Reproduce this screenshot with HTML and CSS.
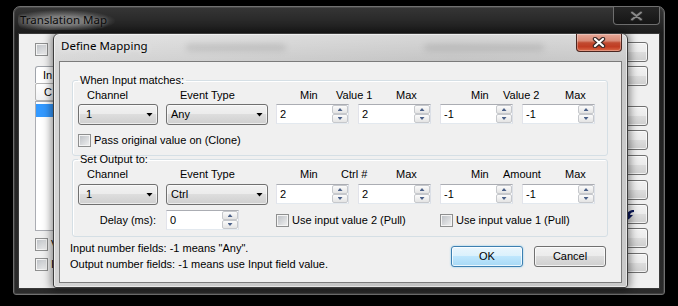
FILE: index.html
```html
<!DOCTYPE html>
<html lang="en">
<head>
  <meta charset="UTF-8">
  <title>Define Mapping</title>
  <link rel="stylesheet" href="styles.css">
</head>
<body>
  <div class="desktop">
    <div class="win-bg">
      <div class="bg-title">
        <span class="bg-caption">Translation Map</span>
        <span class="bg-close"><svg width="13" height="10" viewBox="0 0 13 10"><path d="M2 1.5l9 7M11 1.5l-9 7" stroke="#2a2a2a" stroke-width="4" stroke-linecap="round"/><path d="M2 1.5l9 7M11 1.5l-9 7" stroke="#8a8a8a" stroke-width="2" stroke-linecap="round"/></svg></span>
      </div>
      <div class="bg-client">
        <div class="bg-left">
          <span class="chk"></span>
          <div class="bg-tab">In</div>
          <div class="bg-head">C</div>
          <div class="bg-list"><div class="bg-sel"></div></div>
          <div class="bg-opt"><span class="chk"></span>V</div>
          <div class="bg-opt"><span class="chk"></span>I</div>
        </div>
        <div class="bg-buttons">
          <span class="bg-btn"></span>
          <span class="bg-btn"></span>
          <span class="bg-btn sep"></span>
          <span class="bg-btn"></span>
          <span class="bg-btn m5"></span>
          <span class="bg-btn m5"></span>
          <span class="bg-btn"><svg class="bg-arrow" width="12" height="12" viewBox="0 0 12 12"><path d="M11 2C7 2 4 4 4 7H1l4.5 4.5L10 7H7c0-2 2-3 4-3z" fill="#0c1a5c"/></svg></span>
          <span class="bg-btn"></span>
          <span class="bg-btn m5"></span>
        </div>
      </div>
    </div>

    <div class="dialog">
      <div class="dlg-title">
        <span class="dlg-caption">Define Mapping</span>
        <span class="ghost g1"></span>
        <span class="ghost g2"></span>
        <span class="dlg-close"><svg width="14" height="11" viewBox="0 0 14 11"><path d="M3 2l8 7M11 2l-8 7" stroke="#3b2a28" stroke-width="4.4" stroke-linecap="round"/><path d="M3 2l8 7M11 2l-8 7" stroke="#fff" stroke-width="2.2" stroke-linecap="round"/></svg></span>
      </div>
      <div class="dlg-client">
        <fieldset class="group">
          <legend>When Input matches:</legend>
          <div class="heads">
            <span class="first">Channel</span>
            <span>Event Type</span>
            <span>Min</span>
            <span>Value 1</span>
            <span>Max</span>
            <span>Min</span>
            <span>Value 2</span>
            <span>Max</span>
          </div>
          <div class="controls">
            <span class="combo ch"><span>1</span><b></b></span>
            <span class="combo ev"><span>Any</span><b></b></span>
            <span class="spin"><span class="val">2</span><span class="arrows"><i class="up"></i><i class="dn"></i></span></span>
            <span class="spin"><span class="val">2</span><span class="arrows"><i class="up"></i><i class="dn"></i></span></span>
            <span class="spin"><span class="val">-1</span><span class="arrows"><i class="up"></i><i class="dn"></i></span></span>
            <span class="spin"><span class="val">-1</span><span class="arrows"><i class="up"></i><i class="dn"></i></span></span>
          </div>
          <label class="check clone"><span class="chk"></span>Pass original value on (Clone)</label>
        </fieldset>

        <fieldset class="group out">
          <legend>Set Output to:</legend>
          <div class="heads">
            <span class="first">Channel</span>
            <span>Event Type</span>
            <span>Min</span>
            <span class="ctrl">Ctrl #</span>
            <span>Max</span>
            <span>Min</span>
            <span>Amount</span>
            <span>Max</span>
          </div>
          <div class="controls">
            <span class="combo ch"><span>1</span><b></b></span>
            <span class="combo ev"><span>Ctrl</span><b></b></span>
            <span class="spin"><span class="val">2</span><span class="arrows"><i class="up"></i><i class="dn"></i></span></span>
            <span class="spin"><span class="val">2</span><span class="arrows"><i class="up"></i><i class="dn"></i></span></span>
            <span class="spin"><span class="val">-1</span><span class="arrows"><i class="up"></i><i class="dn"></i></span></span>
            <span class="spin"><span class="val">-1</span><span class="arrows"><i class="up"></i><i class="dn"></i></span></span>
          </div>
          <div class="controls delay">
            <span class="delay-label">Delay (ms):</span>
            <span class="delay-cell"><span class="spin"><span class="val">0</span><span class="arrows"><i class="up"></i><i class="dn"></i></span></span></span>
            <label class="check pull2"><span class="chk"></span>Use input value 2 (Pull)</label>
            <label class="check"><span class="chk"></span>Use input value 1 (Pull)</label>
          </div>
        </fieldset>

        <div class="footer">
          <div class="notes">
            <p>Input number fields: -1 means "Any".</p>
            <p>Output number fields: -1 means use Input field value.</p>
          </div>
          <button class="btn default">OK</button>
          <button class="btn">Cancel</button>
        </div>
      </div>
    </div>
  </div>
</body>
</html>
```

FILE: styles.css
```css
body { margin: 0; background: #000; font-family: "Liberation Sans", Arial, sans-serif; font-size: 11px; line-height: 13px; color: #000; }
.desktop { position: relative; width: 678px; height: 306px; overflow: hidden; }

/* window behind */
.win-bg { position: absolute; left: 13px; top: 6px; width: 652px; height: 289px; box-sizing: border-box; border: 1px solid #707070; border-radius: 7px 7px 3px 3px; padding: 0 4px 5px; display: flex; flex-direction: column; background: linear-gradient(180deg, #363636 0, #1d1d1d 26px, #2b2b2b 100%); box-shadow: inset 0 0 0 1px rgba(255,255,255,0.1); }
.bg-title { height: 26px; flex: none; display: flex; align-items: flex-start; }
.bg-caption { font-family: "Noto Sans", sans-serif; font-size: 11.5px; line-height: 16px; margin-top: 3px; padding: 2px 8px 2px 2px; color: #0a0a0a; border-radius: 8px; background: radial-gradient(ellipse at 45% 55%, rgba(150,150,150,0.75) 30%, rgba(120,120,120,0) 72%); text-shadow: 0 0 3px rgba(170,170,170,0.6); }
.bg-close { margin-left: auto; width: 47px; height: 18px; box-sizing: border-box; border: 1px solid #6e6e6e; border-top: none; border-radius: 0 0 4px 4px; background: linear-gradient(#262626, #151515); display: flex; align-items: center; justify-content: center; }
.bg-client { flex: 1; border: 1px solid #3a3a3a; background: #f0f0f0; display: flex; justify-content: space-between; overflow: hidden; }
.bg-left { padding-left: 16px; width: 32px; overflow: hidden; display: flex; flex-direction: column; align-items: flex-start; }
.bg-left > .chk { margin-top: 9px; }
.bg-tab { margin-top: 10px; width: 80px; height: 17px; flex: none; box-sizing: border-box; border: 1px solid #a0a4ab; border-bottom: none; border-radius: 3px 3px 0 0; padding-left: 7px; line-height: 16px; background: #fff; }
.bg-head { width: 80px; height: 18px; flex: none; box-sizing: border-box; border: 1px solid #b5b5b5; border-radius: 2px; padding-left: 8px; line-height: 16px; background: linear-gradient(#ffffff, #f1f2f4); }
.bg-list { width: 80px; height: 130px; flex: none; box-sizing: border-box; border: 1px solid #abadb3; background: #fff; padding: 2px 0 0 0; }
.bg-sel { height: 13px; background: #3399ff; }
.bg-opt { margin-top: 7px; display: flex; align-items: center; gap: 3px; }
.bg-buttons { padding: 8px 11px 0 0; display: flex; flex-direction: column; gap: 4px; }
.bg-btn { display: block; width: 80px; height: 20px; box-sizing: border-box; border: 1px solid #707070; border-radius: 3px; background: linear-gradient(#f2f2f2, #ebebeb 50%, #dddddd 50%, #cfcfcf); box-shadow: inset 0 0 0 1px rgba(255,255,255,0.7); }
.bg-btn.sep { margin-top: 16px; }
.bg-btn.m5 { margin-top: 1px; }
.bg-arrow { display: block; margin: 3px 0 0 54px; }

/* dialog */
.dialog { position: absolute; left: 53px; top: 33px; width: 575px; height: 255px; box-sizing: border-box; border: 1px solid #3d3d3d; border-radius: 6px 6px 3px 3px; padding: 0 5px 4px; display: flex; flex-direction: column; background: linear-gradient(180deg, rgba(255,255,255,0.35), rgba(255,255,255,0) 30px), linear-gradient(100deg, #d6d6d6 0%, #cbcbcb 35%, #c2c2c2 65%, #cacaca 100%); box-shadow: inset 0 0 0 1px rgba(255,255,255,0.55), 0 0 9px 2px rgba(0,0,0,0.45); }
.dlg-title { height: 27px; flex: none; display: flex; align-items: flex-start; }
.dlg-caption { font-family: "Noto Sans", sans-serif; font-size: 11.5px; line-height: 16px; padding: 4px 0 0 2px; color: #000; text-shadow: 0 0 6px rgba(255,255,255,0.8); }
.ghost { height: 7px; margin-top: 10px; border-radius: 4px; background: #707070; opacity: 0.22; filter: blur(3px); }
.ghost.g1 { width: 100px; margin-left: 38px; }
.ghost.g2 { width: 120px; margin-left: 138px; }
.dlg-close { margin-left: auto; width: 46px; height: 18px; box-sizing: border-box; border: 1px solid #4a2620; border-top: none; border-radius: 0 0 4px 4px; display: flex; align-items: center; justify-content: center; background: linear-gradient(#e7a898 0%, #d88a76 40%, #c14a30 52%, #c03c22 75%, #db6a48 100%); box-shadow: inset 0 0 0 1px rgba(255,255,255,0.3); }
.dlg-client { flex: 1; border: 1px solid #7b7b7b; background: #f0f0f0; padding: 12px 13px 0 12px; }

.group { margin: 0; padding: 2px 0 8px 5px; border: 1px solid #d5dfe5; border-radius: 3px; min-width: 0; box-shadow: inset 1px 1px 0 #fff; }
.group legend { padding: 0 2px; line-height: 13px; }
.group.out { margin-top: -3px; padding: 2px 0 6px 5px; }

.heads { display: grid; grid-template-columns: 102px 120px 36px 60px 75px 32px 62px auto; }
.heads .first { padding-left: 9px; }
.heads .ctrl { padding-left: 5px; }

.controls { display: flex; align-items: flex-start; margin-top: 2px; }
.out .controls { margin-top: 3px; }
.out .controls.delay { margin-top: 5px; align-items: center; }

.combo { height: 21px; box-sizing: border-box; border: 1px solid #707070; border-radius: 3px; display: flex; align-items: center; padding-left: 4px; background: linear-gradient(#f2f2f2, #ebebeb 50%, #dddddd 50%, #cfcfcf); box-shadow: inset 0 0 0 1px rgba(255,255,255,0.6); }
.combo b { margin-left: auto; margin-right: 4px; width: 7px; height: 4px; background: #000; clip-path: polygon(0 0, 100% 0, 50% 100%); }
.combo.ch { width: 80px; padding-left: 7px; margin-right: 8px; }
.combo.ev { width: 102px; margin-right: 8px; }

.spin { width: 73px; height: 20px; box-sizing: border-box; display: flex; border: 1px solid; border-color: #abadb3 #dbdfe6 #e3e9ef #e2e3ea; background: #fff; }
.controls > .spin + .spin { margin-left: 9px; }
.spin .val { flex: 1; padding-left: 3px; line-height: 18px; }
.arrows { width: 16px; display: flex; flex-direction: column; }
.arrows i { flex: 1; box-sizing: border-box; border: 1px solid #c6c8cc; border-radius: 2px; background: linear-gradient(#fbfbfb, #e4e4e4); display: flex; align-items: center; justify-content: center; }
.arrows i::after { content: ""; width: 5px; height: 3px; background: #4b6088; }
.arrows .up::after { clip-path: polygon(50% 0, 100% 100%, 0 100%); }
.arrows .dn::after { clip-path: polygon(0 0, 100% 0, 50% 100%); }

.check { display: flex; align-items: center; }
.chk { display: block; width: 13px; height: 13px; box-sizing: border-box; border: 1px solid #8e8f8f; background: linear-gradient(135deg, #b9bdc2, #f2f2f2); box-shadow: inset 0 0 0 1px #f4f4f4; flex: none; }
.check .chk { margin-right: 3px; }
.check.clone { margin-top: 9px; }

.delay-label { width: 80px; box-sizing: border-box; text-align: right; padding-right: 2px; margin-right: 8px; }
.delay-cell { width: 102px; margin-right: 8px; }
.check.pull2 { width: 156px; margin-right: 8px; }

.footer { display: flex; align-items: flex-start; margin: 4px 2px 0 -2px; }
.notes { flex: 1; margin-top: -1px; }
.notes p { margin: 0; line-height: 16px; }
.btn { margin-top: 5px; width: 72px; height: 21px; box-sizing: border-box; border: 1px solid #707070; border-radius: 3px; font: inherit; color: #000; padding: 0; background: linear-gradient(#f2f2f2, #ebebeb 50%, #dddddd 50%, #cfcfcf); box-shadow: inset 0 0 0 1px rgba(255,255,255,0.7); }
.btn + .btn { margin-left: 11px; }
.btn.default { border-color: #3c7fb1; background: linear-gradient(#eaf6fd, #d9f0fc 50%, #bee6fd 50%, #a7d9f5); box-shadow: inset 0 0 0 1px rgba(255,255,255,0.75), 0 0 2px #7cc5ec; }
```
